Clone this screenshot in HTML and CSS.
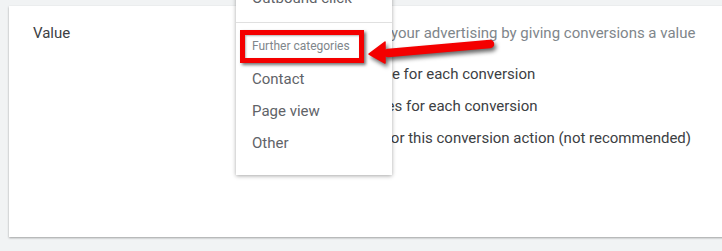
FILE: index.html
```html
<!DOCTYPE html>
<html lang="en">
<head>
  <meta charset="UTF-8" />
  <title>Conversion value</title>
  <link rel="stylesheet" href="styles.css">
</head>
<body>

  <div class="page">
    <div class="card">
      <div class="label">Value</div>
      <div class="field">
        <p class="description">Measure the impact of your advertising by giving conversions a value</p>
        <div class="options">
          <div class="option"><span class="radio"></span>Use the same value for each conversion</div>
          <div class="option"><span class="radio"></span>Use different values for each conversion</div>
          <div class="option"><span class="radio"></span>Don't use a value for this conversion action (not recommended)</div>
        </div>
      </div>
    </div>
  </div>

  <!-- category dropdown, open over the form -->
  <div class="menu">
    <div class="item">Outbound click</div>
    <div class="divider"></div>
    <div class="group">Further categories</div>
    <div class="item">Contact</div>
    <div class="item">Page view</div>
    <div class="item">Other</div>
  </div>

  <!-- annotation -->
  <div class="highlight"></div>
  <svg class="arrow" width="140" height="40" viewBox="0 0 140 40">
    <path d="M22 20 L124 11" stroke="#f40000" stroke-width="8.5" stroke-linecap="round" fill="none"/>
    <path d="M3 21 L19 9 L19 30 Z" fill="#f40000" stroke="#f40000" stroke-width="1.5" stroke-linejoin="round"/>
  </svg>

</body>
</html>
```

FILE: styles.css
```css
body {
  font-family: Roboto, 'Noto Sans', sans-serif;
  background-color: #f1f3f4;
  margin: 0;
  overflow: hidden;
  position: relative;
  height: 251px;
}
.page {
  padding: 6px 0 0 9px;
}
.card {
  background-color: white;
  height: 231px;
  margin-right: -30px;
  box-shadow: 0 1px 2px rgba(0,0,0,0.35);
  display: grid;
  grid-template-columns: 204px 1fr;
  padding: 17px 0 0 24px;
  box-sizing: border-box;
}
.label {
  font-size: 15px;
  line-height: 20px;
  color: #3c4043;
}
.description {
  margin: 0;
  font-size: 15px;
  line-height: 20px;
  color: #80868b;
}
.options {
  margin-top: 15px;
}
.option {
  display: flex;
  align-items: center;
  height: 32px;
  font-size: 15px;
  color: #3c4043;
}
.radio {
  width: 16px;
  height: 16px;
  border: 2px solid #5f6368;
  border-radius: 50%;
  margin-right: 13px;
}

.menu {
  position: absolute;
  left: 236px;
  top: -26px;
  width: 156px;
  background-color: white;
  padding: 8px 0 16px;
  box-shadow: 0 1px 4px rgba(0,0,0,0.35);
}
.item {
  height: 32px;
  line-height: 32px;
  padding-left: 16px;
  font-size: 15px;
  color: #5f6368;
}
.divider {
  height: 1px;
  background-color: #e0e0e0;
  margin-top: 8px;
}
.group {
  padding: 15px 16px 9px;
  line-height: 16px;
  font-size: 12px;
  color: #80868b;
}

.highlight {
  position: absolute;
  left: 240px;
  top: 30px;
  width: 114px;
  height: 23px;
  border: 5px solid #f40000;
  box-shadow: 2px 2px 3px rgba(0,0,0,0.55), inset 1px 1px 2px rgba(0,0,0,0.3);
}
.arrow {
  position: absolute;
  left: 366px;
  top: 33px;
  filter: drop-shadow(2px 3px 2px rgba(0,0,0,0.6));
}
```
